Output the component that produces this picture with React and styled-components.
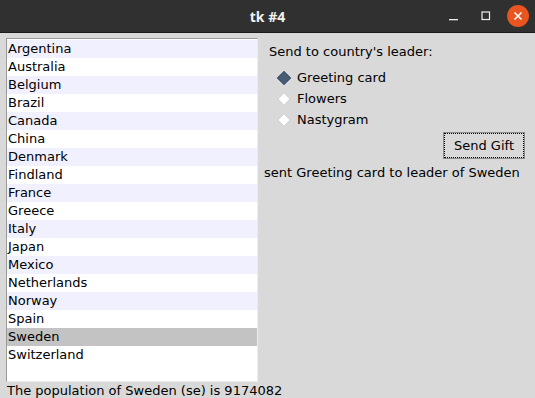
import React, { useState } from "react";
import styled, { createGlobalStyle } from "styled-components";

const countries = [
  "Argentina", "Australia", "Belgium", "Brazil", "Canada", "China", "Denmark",
  "Findland", "France", "Greece", "Italy", "Japan", "Mexico", "Netherlands",
  "Norway", "Spain", "Sweden", "Switzerland",
];

const gifts = ["Greeting card", "Flowers", "Nastygram"];

const GlobalStyle = createGlobalStyle`
  html, body {
    margin: 0;
    padding: 0;
    background: #d9d9d9;
    overflow: hidden;
  }
  body {
    font-family: "DejaVu Sans", sans-serif;
    font-size: 13px;
    color: #000;
  }
`;

const Window = styled.div`
  width: 535px;
  height: 398px;
  display: flex;
  flex-direction: column;
  background: #d9d9d9;
  overflow: hidden;
`;

const TitleBar = styled.div`
  height: 32px;
  flex-shrink: 0;
  background: #303030;
  border-bottom: 1px solid #1a1a1a;
  display: grid;
  grid-template-columns: 1fr auto 1fr;
  align-items: center;
`;

const Title = styled.div`
  grid-column: 2;
  color: #f2f2f2;
  font-weight: bold;
  font-size: 14px;
  font-family: "Noto Sans", "DejaVu Sans", sans-serif;
`;

const Controls = styled.div`
  grid-column: 3;
  justify-self: end;
  display: flex;
  align-items: center;
  gap: 10px;
  padding-right: 6px;
`;

const CtrlBtn = styled.div`
  width: 22px;
  height: 22px;
  display: flex;
  align-items: center;
  justify-content: center;
  border-radius: 50%;
  background: ${(p) => (p.$close ? "#e9541f" : "transparent")};
`;

const Body = styled.div`
  flex: 1;
  display: flex;
  padding: 5px 0 0 6px;
`;

const LeftCol = styled.div`
  width: 252px;
  display: flex;
  flex-direction: column;
`;

const ListBox = styled.div`
  height: 341px;
  background: #fff;
  border-top: 1px solid #9a9a9a;
  border-left: 1px solid #9a9a9a;
  border-right: 1px solid #ececec;
  border-bottom: 1px solid #ececec;
  padding-top: 1px;
`;

const Row = styled.div`
  height: 18px;
  line-height: 18px;
  padding-left: 1px;
  white-space: nowrap;
  background: ${(p) => (p.$selected ? "#c3c3c3" : p.$odd ? "#fff" : "#f0f0ff")};
`;

const Status = styled.div`
  margin-left: 1px;
  line-height: 18px;
  white-space: nowrap;
`;

const RightCol = styled.div`
  flex: 1;
  display: flex;
  flex-direction: column;
  padding-top: 5px;
`;

const Heading = styled.div`
  margin-left: 11px;
  line-height: 18px;
  margin-bottom: 6px;
`;

const Radio = styled.label`
  display: flex;
  align-items: center;
  height: 21px;
  margin-left: 21px;
  cursor: pointer;
`;

const Diamond = styled.span`
  width: 8px;
  height: 8px;
  margin: 0 8px 0 0;
  transform: rotate(45deg);
  background: ${(p) => (p.$on ? "#475d74" : "#fff")};
  border: 1px solid ${(p) => (p.$on ? "#3d526a" : "#c8c8c8")};
`;

const ButtonRow = styled.div`
  display: flex;
  justify-content: flex-end;
  padding-right: 10px;
  margin-top: 2px;
`;

const Button = styled.button`
  width: 82px;
  height: 27px;
  font-family: inherit;
  font-size: 13px;
  background: #d9d9d9;
  border: 1px solid #8a8a8a;
  outline: 1px dotted #000;
  outline-offset: -2px;
  padding: 0;
  color: #000;
`;

const Sent = styled.div`
  margin-left: 6px;
  margin-top: 5px;
  line-height: 18px;
  white-space: nowrap;
`;

export default function App() {
  const [selected, setSelected] = useState(16);
  const [gift, setGift] = useState(0);
  const name = countries[selected];

  return (
    <Window>
      <GlobalStyle />
      <TitleBar>
        <Title>tk #4</Title>
        <Controls>
          <CtrlBtn>
            <svg width="12" height="12" viewBox="0 0 12 12">
              <rect x="1" y="9" width="9" height="1.3" fill="#eee" />
            </svg>
          </CtrlBtn>
          <CtrlBtn>
            <svg width="12" height="12" viewBox="0 0 12 12">
              <rect x="2" y="2" width="7.5" height="7.5" fill="none" stroke="#eee" strokeWidth="1.2" />
            </svg>
          </CtrlBtn>
          <CtrlBtn $close>
            <svg width="12" height="12" viewBox="0 0 12 12">
              <path d="M2.5 2.5 L9.5 9.5 M9.5 2.5 L2.5 9.5" stroke="#fff" strokeWidth="1.6" />
            </svg>
          </CtrlBtn>
        </Controls>
      </TitleBar>
      <Body>
        <LeftCol>
          <ListBox>
            {countries.map((c, i) => (
              <Row
                key={c}
                $odd={i % 2 === 1}
                $selected={i === selected}
                onClick={() => setSelected(i)}
              >
                {c}
              </Row>
            ))}
          </ListBox>
          <Status>The population of {name} (se) is 9174082</Status>
        </LeftCol>
        <RightCol>
          <Heading>Send to country's leader:</Heading>
          {gifts.map((g, i) => (
            <Radio key={g} onClick={() => setGift(i)}>
              <Diamond $on={i === gift} />
              {g}
            </Radio>
          ))}
          <ButtonRow>
            <Button>Send Gift</Button>
          </ButtonRow>
          <Sent>sent {gifts[gift]} to leader of {name}</Sent>
        </RightCol>
      </Body>
    </Window>
  );
}
